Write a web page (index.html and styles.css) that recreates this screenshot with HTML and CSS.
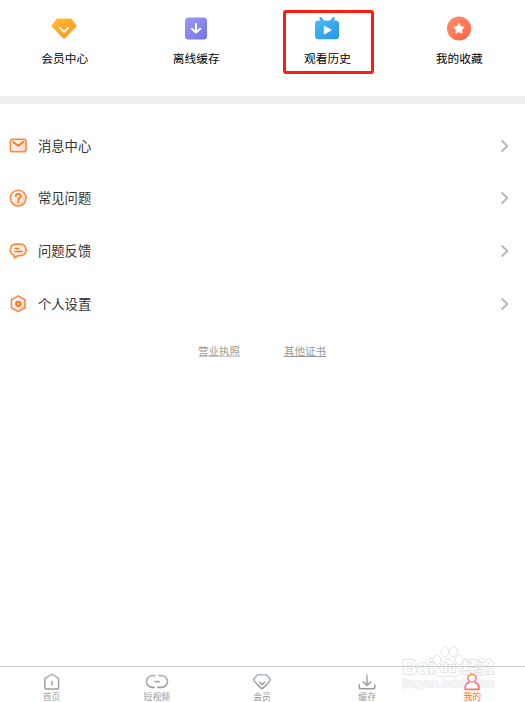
FILE: index.html
```html
<!DOCTYPE html>
<html lang="zh-CN">
<head>
<meta charset="utf-8">
<title>我的</title>
<link rel="stylesheet" href="styles.css">
</head>
<body>
<svg class="defs" width="0" height="0" aria-hidden="true">
  <defs>
    <linearGradient id="gold" x1="0" y1="0" x2="1" y2="1"><stop offset="0" stop-color="#ffbd35"/><stop offset="1" stop-color="#ff9216"/></linearGradient>
    <linearGradient id="violet" x1="0" y1="0" x2="1" y2="1"><stop offset="0" stop-color="#9d9bf5"/><stop offset="1" stop-color="#7370e8"/></linearGradient>
    <linearGradient id="blue" x1="0" y1="0" x2="1" y2="1"><stop offset="0" stop-color="#45bdf3"/><stop offset="1" stop-color="#2894e8"/></linearGradient>
    <linearGradient id="coral" x1="0" y1="0" x2="1" y2="1"><stop offset="0" stop-color="#ff8f68"/><stop offset="1" stop-color="#ff6245"/></linearGradient>
    <linearGradient id="peach" x1="0" y1="0" x2="1" y2="1"><stop offset=".2" stop-color="#fff"/><stop offset="1" stop-color="#ffcfae"/></linearGradient>
    <linearGradient id="steel" gradientUnits="userSpaceOnUse" x1="0" y1="1" x2="0" y2="17"><stop offset="0" stop-color="#adbacb"/><stop offset="1" stop-color="#999"/></linearGradient>
    <linearGradient id="sunset" gradientUnits="userSpaceOnUse" x1="8" y1="1" x2="14" y2="18"><stop offset="0" stop-color="#ff9a35"/><stop offset=".5" stop-color="#ff7eac"/><stop offset="1" stop-color="#ff7540"/></linearGradient>
  </defs>
</svg>
<main class="page">
  <nav class="shortcuts">
    <a class="shortcut">
      <svg width="28" height="26" viewBox="0 0 28 26"><path d="M6 4H20L25.3 11 14.2 22.6Q13 23.8 11.8 22.6L.7 11Z" fill="url(#gold)" stroke="url(#gold)" stroke-linejoin="round"/><path d="M8.9 12.9 13.1 16.9 17.3 12.9" fill="none" stroke="#fff" stroke-width="1.8" stroke-linecap="round" stroke-linejoin="round"/></svg>
      <span>会员中心</span>
    </a>
    <a class="shortcut">
      <svg width="28" height="26" viewBox="0 0 28 26"><rect x="3" y="2.4" width="22" height="22.2" rx="3.5" fill="url(#violet)"/><path d="M14 9V17.3M9.8 13.7 14 17.6 18.2 13.7" fill="none" stroke="#fff" stroke-width="2" stroke-linecap="round" stroke-linejoin="round"/></svg>
      <span>离线缓存</span>
    </a>
    <a class="shortcut highlighted">
      <svg width="28" height="26" viewBox="0 0 28 26"><path d="M6.8 3.4 8.5 6M19.4 3.4 17.7 6" stroke="#3eaded" stroke-width="2.8" stroke-linecap="round"/><rect x="1" y="5.6" width="24" height="18.6" rx="3.5" fill="url(#blue)"/><path d="M10.3 11.2 17.2 15.1 10.3 19Z" fill="#fff" stroke="#fff" stroke-linejoin="round"/></svg>
      <span>观看历史</span>
    </a>
    <a class="shortcut">
      <svg width="28" height="26" viewBox="0 0 28 26"><circle cx="14" cy="13.5" r="12" fill="url(#coral)"/><path d="M14 8.5 15.7 11.5 19.1 12.2 16.8 14.8 17.1 18.2 14 16.8 10.9 18.2 11.2 14.8 8.9 12.2 12.3 11.5Z" fill="#fff" stroke="#fff" stroke-width=".8" stroke-linejoin="round"/></svg>
      <span>我的收藏</span>
    </a>
  </nav>
  <section class="menu">
    <a class="row">
      <svg class="icon" width="20" height="20" viewBox="0 0 20 20"><rect x="2.4" y="3.4" width="15.6" height="12.4" rx="2" fill="url(#peach)" stroke="#ff8742" stroke-width="1.6"/><path d="M5 6 10.2 9.8 15.5 6" fill="none" stroke="#ff7420" stroke-width="1.8" stroke-linecap="round" stroke-linejoin="round"/></svg>
      <span>消息中心</span>
      <svg class="chevron" width="10" height="14" viewBox="0 0 10 14"><path d="M2.2 2 7.3 7 2.2 12"/></svg>
    </a>
    <a class="row">
      <svg class="icon" width="20" height="20" viewBox="0 0 20 20"><circle cx="10.2" cy="10.1" r="7.9" fill="url(#peach)" stroke="#ff8742" stroke-width="1.6"/><path d="M7.8 8.2C7.8 5.2 12.7 5.2 12.7 8.2 12.7 9.9 10.3 10 10.3 12" fill="none" stroke="#ff7420" stroke-width="1.8" stroke-linecap="round"/><circle cx="10.2" cy="14.3" r="1.1" fill="#ff7420"/></svg>
      <span>常见问题</span>
      <svg class="chevron" width="10" height="14" viewBox="0 0 10 14"><path d="M2.2 2 7.3 7 2.2 12"/></svg>
    </a>
    <a class="row">
      <svg class="icon" width="20" height="20" viewBox="0 0 20 20"><path d="M8.5 3.1H12C20.2 3.1 20.2 14.6 12 14.8H9.8L6.2 17V14.2C.3 12.2 1.2 3.1 8.5 3.1Z" fill="url(#peach)" stroke="#ff8742" stroke-width="1.6" stroke-linejoin="round"/><path d="M7 7.5H10.5M7 10.5H14" stroke="#ff7420" stroke-width="1.6" stroke-linecap="round"/></svg>
      <span>问题反馈</span>
      <svg class="chevron" width="10" height="14" viewBox="0 0 10 14"><path d="M2.2 2 7.3 7 2.2 12"/></svg>
    </a>
    <a class="row">
      <svg class="icon" width="20" height="20" viewBox="0 0 20 20"><path d="M10.2 1.9 17 5.8V13.7L10.2 17.6 3.4 13.7V5.8Z" fill="url(#peach)" stroke="#ff8742" stroke-width="1.6" stroke-linejoin="round"/><circle cx="10.2" cy="9.8" r="2.1" fill="#fff" stroke="#ff7420" stroke-width="2"/></svg>
      <span>个人设置</span>
      <svg class="chevron" width="10" height="14" viewBox="0 0 10 14"><path d="M2.2 2 7.3 7 2.2 12"/></svg>
    </a>
  </section>
  <div class="licenses"><a>营业执照</a><a class="strong">其他证书</a></div>
  <svg class="watermark" width="96" height="50" viewBox="0 0 96 50">
    <g class="mark">
      <ellipse cx="35.2" cy="18" rx="3.6" ry="4.7"/><ellipse cx="42.8" cy="9.5" rx="3.8" ry="5.2"/><ellipse cx="51.5" cy="9.8" rx="3.8" ry="5.2"/><ellipse cx="57.3" cy="18" rx="3.7" ry="4.7"/>
      <path d="M46 17C40.5 17 40 23 35.5 26 31 30 34 35 39 34.5 44 33.5 48 33.5 52 34.5 58 35 60 30 56 26 52 23 51.5 17 46 17Z"/>
      <text x=".5" y="32" class="brand" textLength="32" lengthAdjust="spacingAndGlyphs">Bai</text>
      <text x="38" y="30" class="du" textLength="16">du</text>
      <text x="60" y="31" class="cn" textLength="32">经验</text>
      <text x="0" y="44.5" class="url" textLength="93">jingyan.baidu.com</text>
    </g>
  </svg>
  <nav class="tabs">
    <a class="tab"><svg width="24" height="18" viewBox="0 0 24 18"><path d="M12 1.2 18.6 5.5V14.5Q18.6 16 17.1 16H6.4Q4.9 16 4.9 14.5V5.5Z"/><path d="M12 8.5V12"/></svg><span>首页</span></a>
    <a class="tab"><svg width="24" height="18" viewBox="0 0 24 18"><path d="M10 2.6H7.4A5.6 5.6 0 0 0 7.4 14.4H9.2M13.9 2.6H16.6A5.6 5.6 0 0 1 16.6 14.4H13"/><path d="M9.8 8.6H14.2"/></svg><span>短视频</span></a>
    <a class="tab"><svg width="24" height="18" viewBox="0 0 24 18"><path d="M7.5 1.8H16.5L20.5 6.5Q20.5 8 12.9 15.2 12 16 11.1 15.2 3.5 8 3.5 6.5Z"/><path d="M9.4 9.2 12 11.7 14.6 9.2"/></svg><span>会员</span></a>
    <a class="tab"><svg width="24" height="18" viewBox="0 0 24 18"><path d="M12 2.2V12.2M8.2 8.9 12 12.4 15.8 8.9M4.2 11.8V14Q4.2 15.8 6 15.8H18Q19.8 15.8 19.8 14V11.8"/></svg><span>缓存</span></a>
    <a class="tab active"><svg width="24" height="18" viewBox="0 0 24 18"><circle cx="12" cy="5.2" r="4"/><path d="M9 9.4C6.4 10.6 5.2 12.2 5.2 14.5V16.3H18.8V14.5C18.8 12.2 17.6 10.6 15 9.4"/></svg><span>我的</span></a>
  </nav>
</main>
</body>
</html>
```
FILE: styles.css
```css
* { box-sizing: border-box; }
body { margin: 0; background: #fff; color: #333; font-family: "Noto Sans CJK SC", sans-serif; }
.defs { position: absolute; }
.page { position: relative; height: 702px; width: 525px; display: flex; flex-direction: column; overflow: hidden; }
svg { display: block; flex: none; }
.shortcuts { height: 104px; flex: none; display: grid; grid-template-columns: repeat(4, 131.5px); border-bottom: 8px solid #efefef; margin-left: -1px; padding-top: 10px; }
.shortcut { width: 91px; height: 64px; margin: 0 auto; display: flex; flex-direction: column; align-items: center; padding-top: 5px; font-size: 11.7px; line-height: 18px; color: #000; gap: 7.5px; }
.highlighted { border: 3px solid #ff1b10; border-radius: 3px; padding: 2px 2px 0 0; margin-left: 21px; }
.menu { padding-top: 15.5px; }
.row { height: 52.6px; display: flex; align-items: center; padding: 0 15px 0 8px; font-size: 13.3px; line-height: 20px; }
.row span { margin-left: 10px; flex: 1; }
.chevron path { fill: none; stroke: #b5b5b5; stroke-width: 1.8; stroke-linecap: round; stroke-linejoin: round; }
.licenses { display: flex; justify-content: center; gap: 44px; padding: 13.5px 1px 0 0; font-size: 10.5px; line-height: 16px; color: #999; }
.licenses a { text-decoration: underline; text-decoration-color: #ccc; text-underline-offset: 1px; }
.licenses .strong { text-decoration-color: #999; }
.tabs { position: relative; margin-top: auto; height: 36px; border-top: 1px solid #c8cbcd; display: grid; grid-template-columns: repeat(5, 105.2px); margin-left: -1px; padding-top: 6px; }
.tab { display: flex; flex-direction: column; align-items: center; font-size: 8.8px; line-height: 12px; color: #999; }
.tab svg { fill: none; stroke: url(#steel); stroke-width: 1.6; stroke-linecap: round; stroke-linejoin: round; }
.tab.active { color: #ff6b0a; }
.tab.active svg { stroke: url(#sunset); stroke-width: 1.8; fill: #fff; }
.watermark { position: absolute; left: 402px; top: 642px; pointer-events: none; }
.mark { fill: #fff; stroke: #e2e2e2; stroke-width: .9; }
.mark text { stroke-width: 1.8; paint-order: stroke; stroke-linejoin: round; }
.brand { font: bold 21px "Liberation Sans", sans-serif; }
.du { font: bold 12.5px "Liberation Sans", sans-serif; }
.cn { font: bold 16px "Noto Sans CJK SC", sans-serif; }
.mark .url { font: 11px "Liberation Sans", sans-serif; stroke: #e8e8e8; stroke-width: 1.4; }
```
